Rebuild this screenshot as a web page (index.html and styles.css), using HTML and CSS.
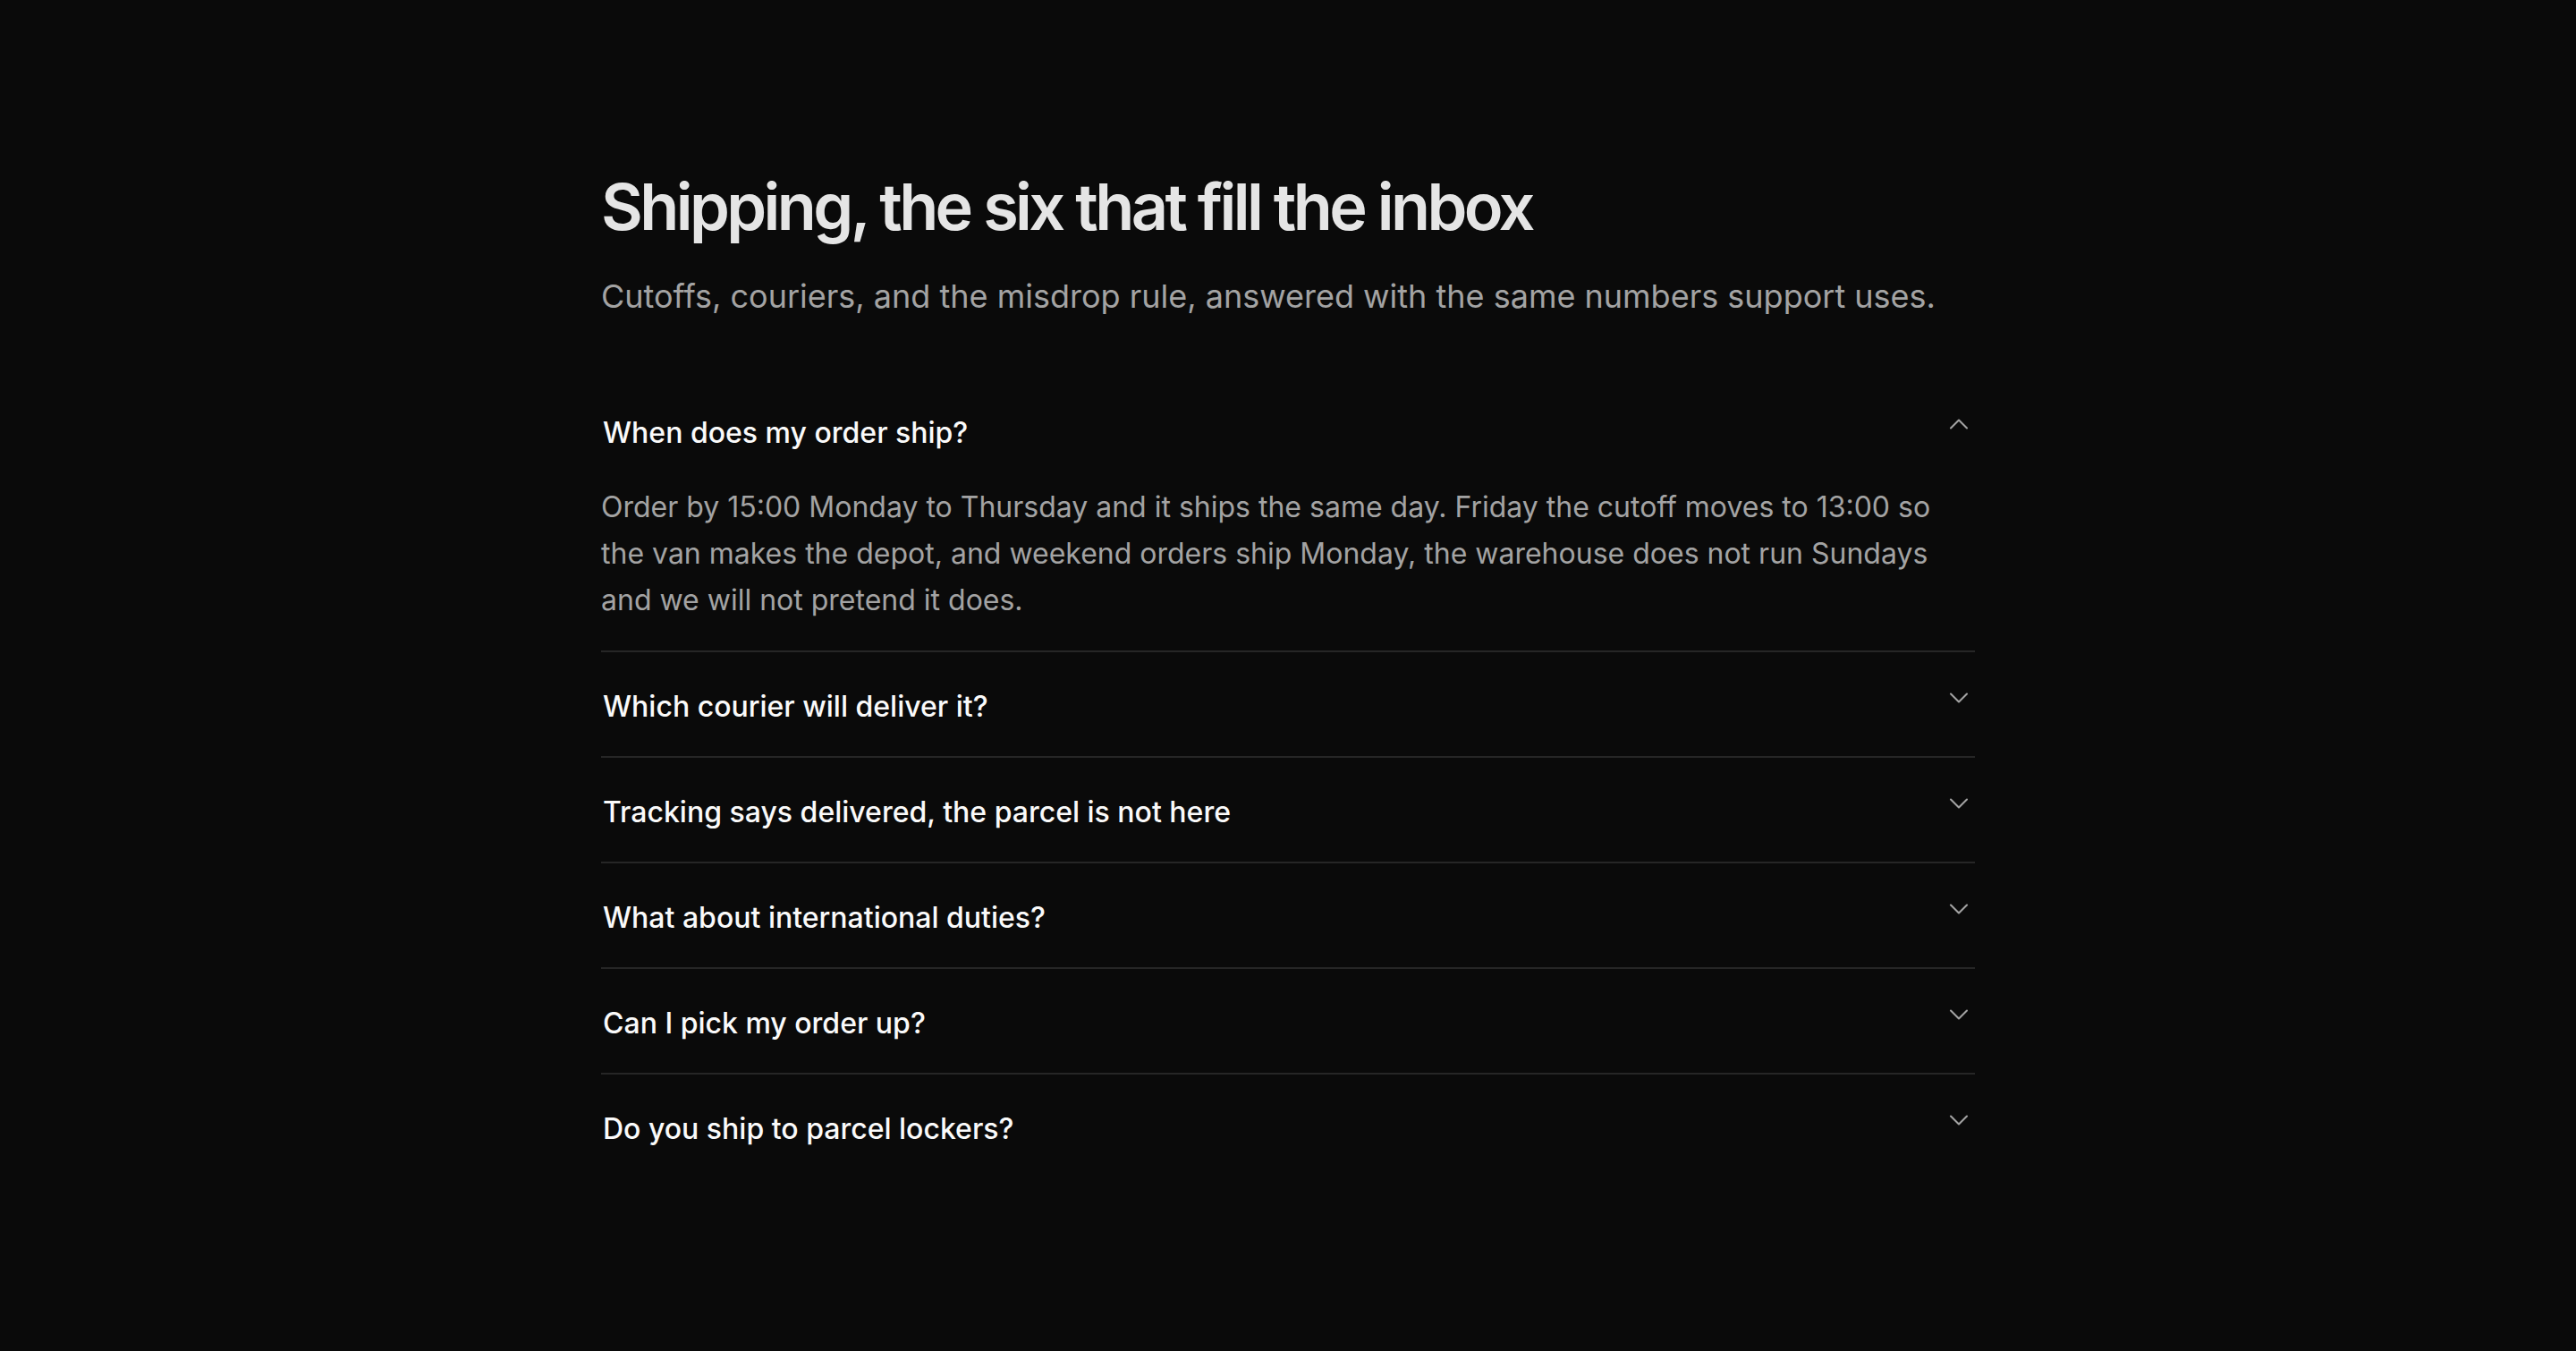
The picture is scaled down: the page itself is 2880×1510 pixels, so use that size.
FILE: index.html
```html
<!DOCTYPE html>
<html lang="en">
<head>
<meta charset="utf-8">
<title>Shipping FAQ</title>
<link rel="stylesheet" href="styles.css">
</head>
<body>
<main class="page">
  <section class="faq">
    <header class="faq-head">
      <h1 class="faq-title">Shipping, the six that fill the inbox</h1>
      <p class="faq-sub">Cutoffs, couriers, and the misdrop rule, answered with the same numbers support uses.</p>
    </header>
    <div class="faq-list">
      <div class="faq-item open">
        <button class="faq-q" type="button">
          <span class="faq-q-text">When does my order ship?</span>
          <svg class="chev" viewBox="0 0 24 24" width="36" height="36" aria-hidden="true"><path d="m6 15 6-6 6 6"/></svg>
        </button>
        <div class="faq-a">Order by 15:00 Monday to Thursday and it ships the same day. Friday the cutoff moves to 13:00 so the van makes the depot, and weekend orders ship Monday, the warehouse does not run Sundays and we will not pretend it does.</div>
      </div>
      <div class="faq-item">
        <button class="faq-q" type="button">
          <span class="faq-q-text">Which courier will deliver it?</span>
          <svg class="chev" viewBox="0 0 24 24" width="36" height="36" aria-hidden="true"><path d="m6 9 6 6 6-6"/></svg>
        </button>
      </div>
      <div class="faq-item">
        <button class="faq-q" type="button">
          <span class="faq-q-text">Tracking says delivered, the parcel is not here</span>
          <svg class="chev" viewBox="0 0 24 24" width="36" height="36" aria-hidden="true"><path d="m6 9 6 6 6-6"/></svg>
        </button>
      </div>
      <div class="faq-item">
        <button class="faq-q" type="button">
          <span class="faq-q-text">What about international duties?</span>
          <svg class="chev" viewBox="0 0 24 24" width="36" height="36" aria-hidden="true"><path d="m6 9 6 6 6-6"/></svg>
        </button>
      </div>
      <div class="faq-item">
        <button class="faq-q" type="button">
          <span class="faq-q-text">Can I pick my order up?</span>
          <svg class="chev" viewBox="0 0 24 24" width="36" height="36" aria-hidden="true"><path d="m6 9 6 6 6-6"/></svg>
        </button>
      </div>
      <div class="faq-item">
        <button class="faq-q" type="button">
          <span class="faq-q-text">Do you ship to parcel lockers?</span>
          <svg class="chev" viewBox="0 0 24 24" width="36" height="36" aria-hidden="true"><path d="m6 9 6 6 6-6"/></svg>
        </button>
      </div>
    </div>
  </section>
</main>
</body>
</html>
```
FILE: styles.css
```css
* { box-sizing: border-box; }
html, body { margin: 0; padding: 0; }
body {
  background: #0a0a0a;
  color: #fafafa;
  font-family: Inter, "Noto Sans", sans-serif;
  min-height: 1510px;
}
.page {
  padding: 191px 0 120px;
}
.faq {
  width: 1536px;
  margin: 0 auto;
}
.faq-head {
  margin-bottom: 67px;
}
.faq-title {
  margin: 0;
  font-size: 72px;
  line-height: 1.1;
  font-weight: 600;
  letter-spacing: -0.05em;
  color: #e5e5e5;
}
.faq-sub {
  margin: 34px 0 0;
  font-size: 36px;
  line-height: 1.5;
  color: #a3a3a3;
}
.faq-item {
  border-bottom: 2px solid #262626;
}
.faq-item:last-child { border-bottom: none; }
.faq-q {
  display: flex;
  align-items: flex-start;
  justify-content: space-between;
  width: 100%;
  padding: 37px 0 31px 2px;
  margin: 0;
  background: none;
  border: none;
  color: #fafafa;
  font-family: inherit;
  font-size: 32px;
  font-weight: 500;
  line-height: 48px;
  text-align: left;
  cursor: pointer;
}
.chev {
  flex: none;
  margin-top: -4px;
  fill: none;
  stroke: #a3a3a3;
  stroke-width: 1.4;
  stroke-linecap: round;
  stroke-linejoin: round;
}
.faq-item.open .faq-q { padding-top: 35px; padding-bottom: 33px; }
.faq-a {
  padding: 0 24px 30px 0;
  font-size: 32px;
  line-height: 52px;
  color: #a3a3a3;
}
```
